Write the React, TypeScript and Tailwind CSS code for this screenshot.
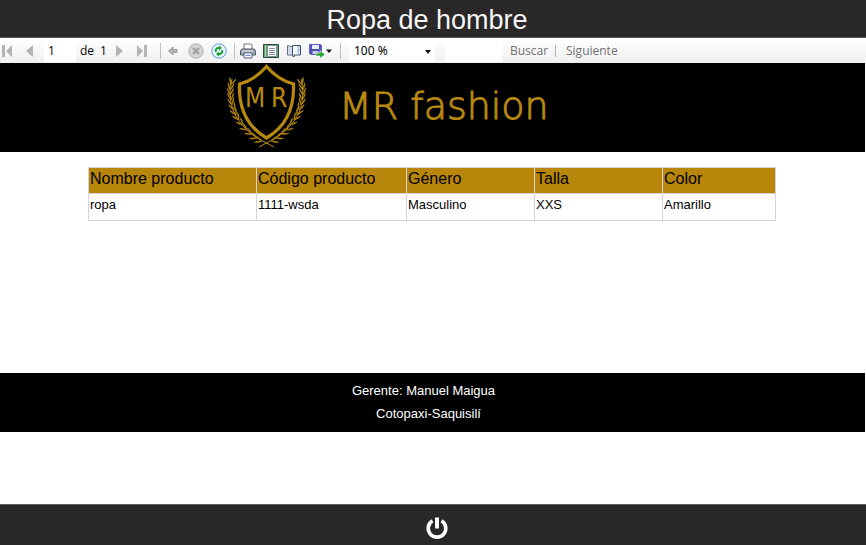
import type { ReactNode } from "react";

const GOLD = "#b8890f";

const COLUMNS = [
  { title: "Nombre producto", width: "w-[168px]" },
  { title: "Código producto", width: "w-[150px]" },
  { title: "Género", width: "w-[128px]" },
  { title: "Talla", width: "w-[128px]" },
  { title: "Color", width: "w-[113px]" },
];
const ROWS = [["ropa", "1111-wsda", "Masculino", "XXS", "Amarillo"]];

// Points and headings of the left laurel branch, from the tip down to the stem.
const LEAVES: [number, number, number][] = [
  [4, 21, -75], [3, 26, -80], [3, 31, -86], [4, 36, -93], [5, 41, -101], [7, 46, -110], [9, 51, -118],
  [12, 56, -126], [16, 61, -134], [20, 66, -144], [25, 70, -152], [30, 74, -160], [35, 77, -166],
];

function Branch() {
  return (
    <g stroke={GOLD} fill="none">
      <path d="M5 15C0 37 6 53 20 66C27 73 36 77 47 83" strokeWidth="1" />
      {LEAVES.map(([x, y, a]) => (
        <g key={y} transform={`translate(${x} ${y}) rotate(${a})`}>
          <path d="M0 0Q4 -3.500 7 -3Q4 -1 0 0Z" fill={GOLD} strokeWidth="0.5" />
          <path d="M0 0Q4 3.500 7 3Q4 1 0 0Z" fill={GOLD} strokeWidth="0.5" />
        </g>
      ))}
    </g>
  );
}

function Crest() {
  return (
    <svg viewBox="0 0 80 84" className="h-[84px] w-20 shrink-0" role="img" aria-label="Escudo MR">
      <Branch />
      <g transform="translate(79 0) scale(-1 1)">
        <Branch />
      </g>
      <path d="M39.5 2.5C33 10 24 17 12.500 20C11.500 44 19 62 39.500 74C60 62 67.500 44 66.500 20C55 17 46 10 39.500 2.500Z" fill="#000" stroke={GOLD} strokeWidth="3.2" />
      <text x="18" y="43" fill={GOLD} fontSize="26" className="font-['DejaVu_Sans_Condensed','Open_Sans',sans-serif]">M</text>
      <text x="44" y="43" fill={GOLD} fontSize="26" className="font-['DejaVu_Sans_Condensed','Open_Sans',sans-serif]">R</text>
    </svg>
  );
}

function Tool({ label, className, children, disabled }: { label: string; className: string; children: ReactNode; disabled?: boolean }) {
  return (
    <button type="button" aria-label={label} title={label} disabled={disabled} className={`flex h-4 shrink-0 items-center justify-center ${className}`}>
      <svg viewBox="0 0 16 16" className="size-4 shrink-0">{children}</svg>
    </button>
  );
}

function Separator({ className }: { className: string }) {
  return <span className={`h-4 w-px shrink-0 bg-[#bfbfbf] ${className}`} />;
}

function Toolbar() {
  return (
    <div className="flex h-[25px] items-center bg-linear-to-b from-white to-[#f0f0f0] font-['Open_Sans',sans-serif] text-[12px] leading-4 text-black">
      <Tool label="Primera página" className="w-4" disabled>
        <path d="M2 2h3v12H2zM12 2v12L6 8z" fill="#b4b4b4" />
      </Tool>
      <Tool label="Página anterior" className="ml-2 w-4" disabled>
        <path d="M9 2v12L2 8z" fill="#b4b4b4" />
      </Tool>
      <input aria-label="Página actual" defaultValue="1" className="ml-1 h-[22px] w-8 bg-white pl-1 outline-none" />
      <span className="ml-1 w-5">de</span>
      <span className="w-3">1</span>
      <Tool label="Página siguiente" className="w-4" disabled>
        <path d="M4 2v12l7-6z" fill="#b4b4b4" />
      </Tool>
      <Tool label="Última página" className="ml-2 w-4" disabled>
        <path d="M1 2v12l6-6zM8 2h3v12H8z" fill="#b4b4b4" />
      </Tool>
      <Separator className="ml-2" />
      <Tool label="Atrás" className="ml-1 w-4" disabled>
        <path d="M3.500 8L8 4v2.500h4v3H8V12z" fill="#b5b5b5" stroke="#8f8f8f" strokeWidth=".8" />
      </Tool>
      <Tool label="Detener" className="ml-[7px] w-4" disabled>
        <circle cx="8" cy="8" r="7.200" fill="#d5d5d5" stroke="#b0b0b0" />
        <path d="M5 5l6 6M11 5l-6 6" stroke="#9b9b9b" strokeWidth="2" />
      </Tool>
      <Tool label="Actualizar" className="ml-[7px] w-4">
        <circle cx="8" cy="8" r="7.200" fill="#e9f4ff" stroke="#6699dc" />
        <path d="M4 9C3 6 5 4 8 4V2.300L11 5 8 7.500V6C6 6 5.500 7 5.700 9ZM12 7C13 10 11 12 8 12v1.700L5 11l3-2.500V10c2 0 2.500-1 2.300-3Z" fill="#21a13a" />
      </Tool>
      <Separator className="ml-[7px]" />
      <Tool label="Imprimir" className="ml-[5px] w-4">
        <path d="M4 7V1h7l1 1v5" fill="#fff" stroke="#6d7688" />
        <path d="M2 6h12l1.500 2v4h-15V8z" fill="#a3a8b1" stroke="#4f5665" />
        <path d="M2 8h11" stroke="#e8eaee" />
        <path d="M4 10h8v5H4z" fill="#fff" stroke="#4f6288" />
        <path d="M5.500 12.500h5" stroke="#6a8fc8" />
      </Tool>
      <Tool label="Diseño de impresión" className="ml-[7px] w-4">
        <path d="M.5 1.500h15v13H.5z" fill="#66a06d" stroke="#234d35" />
        <path d="M4.500 2.500h9v11h-9z" fill="#fff" stroke="#7c93a0" />
        <path d="M6 5.500h6M6 7.500h6M6 9.500h6M6 11.500h6" stroke="#8397ab" />
        <path d="M2.500 2v12" stroke="#b4d9ad" />
      </Tool>
      <Tool label="Configurar página" className="ml-[7px] w-4">
        <path d="M1.500 2.500v9.500h4l2 2V3.500h-3z" fill="#d2dcea" stroke="#62718d" />
        <path d="M6.500 2.500h8v9.500h-6.500v2l-1.500-2z" fill="#f8fbff" stroke="#3e506e" />
        <path d="M12.500 3v8.500" stroke="#a9c0e2" strokeWidth="2" />
      </Tool>
      <button type="button" aria-label="Exportar" className="ml-[7px] flex h-4 w-6 shrink-0 items-center">
        <svg viewBox="0 0 24 16" className="h-4 w-6">
          <path d="M.5 1.500h11l1 1v9H1.500l-1-1z" fill="#4b54b8" stroke="#5962c4" />
          <path d="M3 2h7v4H3z" fill="#e8ecff" />
          <path d="M3.500 8h6v3h-6z" fill="#c4c9e7" />
          <path d="M7 10h4V7.500l5 4-5 4V13H7z" fill="#2ba635" stroke="#fff" strokeWidth=".5" />
          <path d="M17 6.500h6L20 10z" fill="#111" />
        </svg>
      </button>
      <Separator className="ml-[7px]" />
      <div className="relative ml-2 h-[22px] w-[86px] shrink-0 bg-white">
        <select aria-label="Zoom" defaultValue="100" className="h-full w-full appearance-none bg-transparent pl-[5px] font-['Noto_Sans',sans-serif] text-[12px] outline-none">
          <option value="100">100 %</option>
        </select>
        <svg viewBox="0 0 6 4" className="pointer-events-none absolute top-2.5 right-1 h-1 w-1.5"><path d="M0 0h6L3 4z" fill="#111" /></svg>
      </div>
      <input aria-label="Texto de búsqueda" className="ml-2.5 h-[22px] w-[57px] bg-white px-1 outline-none" />
      <button type="button" disabled className="ml-2 w-10 text-left text-[#717171]">Buscar</button>
      <span className="ml-[5px] h-3 w-px bg-[#b4b4b4]" />
      <button type="button" disabled className="ml-2.5 text-[#717171]">Siguiente</button>
    </div>
  );
}

export default function App() {
  return (
    <div className="flex min-h-screen flex-col bg-white font-['Liberation_Sans',Arial,sans-serif] text-black">
      <header className="h-[38px] border-b border-[#5d5b5b] bg-[#292728] pt-1 pr-3 text-center">
        <h1 className="text-[27px] leading-8 text-[#f5f5f5]">Ropa de hombre</h1>
      </header>
      <Toolbar />
      <main className="flex grow flex-col">
        <div className="mr-px flex h-[89px] items-center bg-black pr-1 pb-1 pl-[227px]">
          <Crest />
          <h2 className="ml-8 font-['DejaVu_Sans','Lato',sans-serif] text-[38px] leading-[48px] font-extralight text-[#b8890f] [-webkit-text-stroke:1px_#b8890f]">MR fashion</h2>
        </div>
        <div className="mt-[15px] mr-[90px] ml-[88px]">
          <table className="w-full table-fixed border-collapse text-left">
            <thead>
              <tr className="h-[26px] bg-[#b8860b] align-top">
                {COLUMNS.map((c) => (
                  <th key={c.title} scope="col" className={`${c.width} border border-[#d3d3d3] px-px pt-px text-[16px] leading-5 font-normal whitespace-nowrap`}>{c.title}</th>
                ))}
              </tr>
            </thead>
            <tbody>
              {ROWS.map((row) => (
                <tr key={row[1]} className="h-[27px] align-top">
                  {row.map((cell) => (
                    <td key={cell} className="border border-[#d3d3d3] px-px pt-[3px] text-[13px] leading-4">{cell}</td>
                  ))}
                </tr>
              ))}
            </tbody>
          </table>
        </div>
        <div className="mt-auto mr-px mb-[72px] h-[59px] bg-black pt-1.5 text-center text-[13px] leading-[23px] text-white">
          <p className="pr-[18px]">Gerente: Manuel Maigua</p>
          <p className="pr-2">Cotopaxi-Saquisilí</p>
        </div>
      </main>
      <footer className="flex h-[41px] items-center justify-center border-t border-[#5d5b5b] bg-[#292728] pt-1.5 pl-2">
        <button type="button" aria-label="Salir">
          <svg viewBox="0 0 24 24" className="size-6" fill="none" stroke="#fff">
            <path d="M7.500 4.800A8.800 8.800 0 1 0 16.500 4.800" strokeWidth="3.600" />
            <path d="M12 1.500V12.500" strokeWidth="4" />
          </svg>
        </button>
      </footer>
    </div>
  );
}
